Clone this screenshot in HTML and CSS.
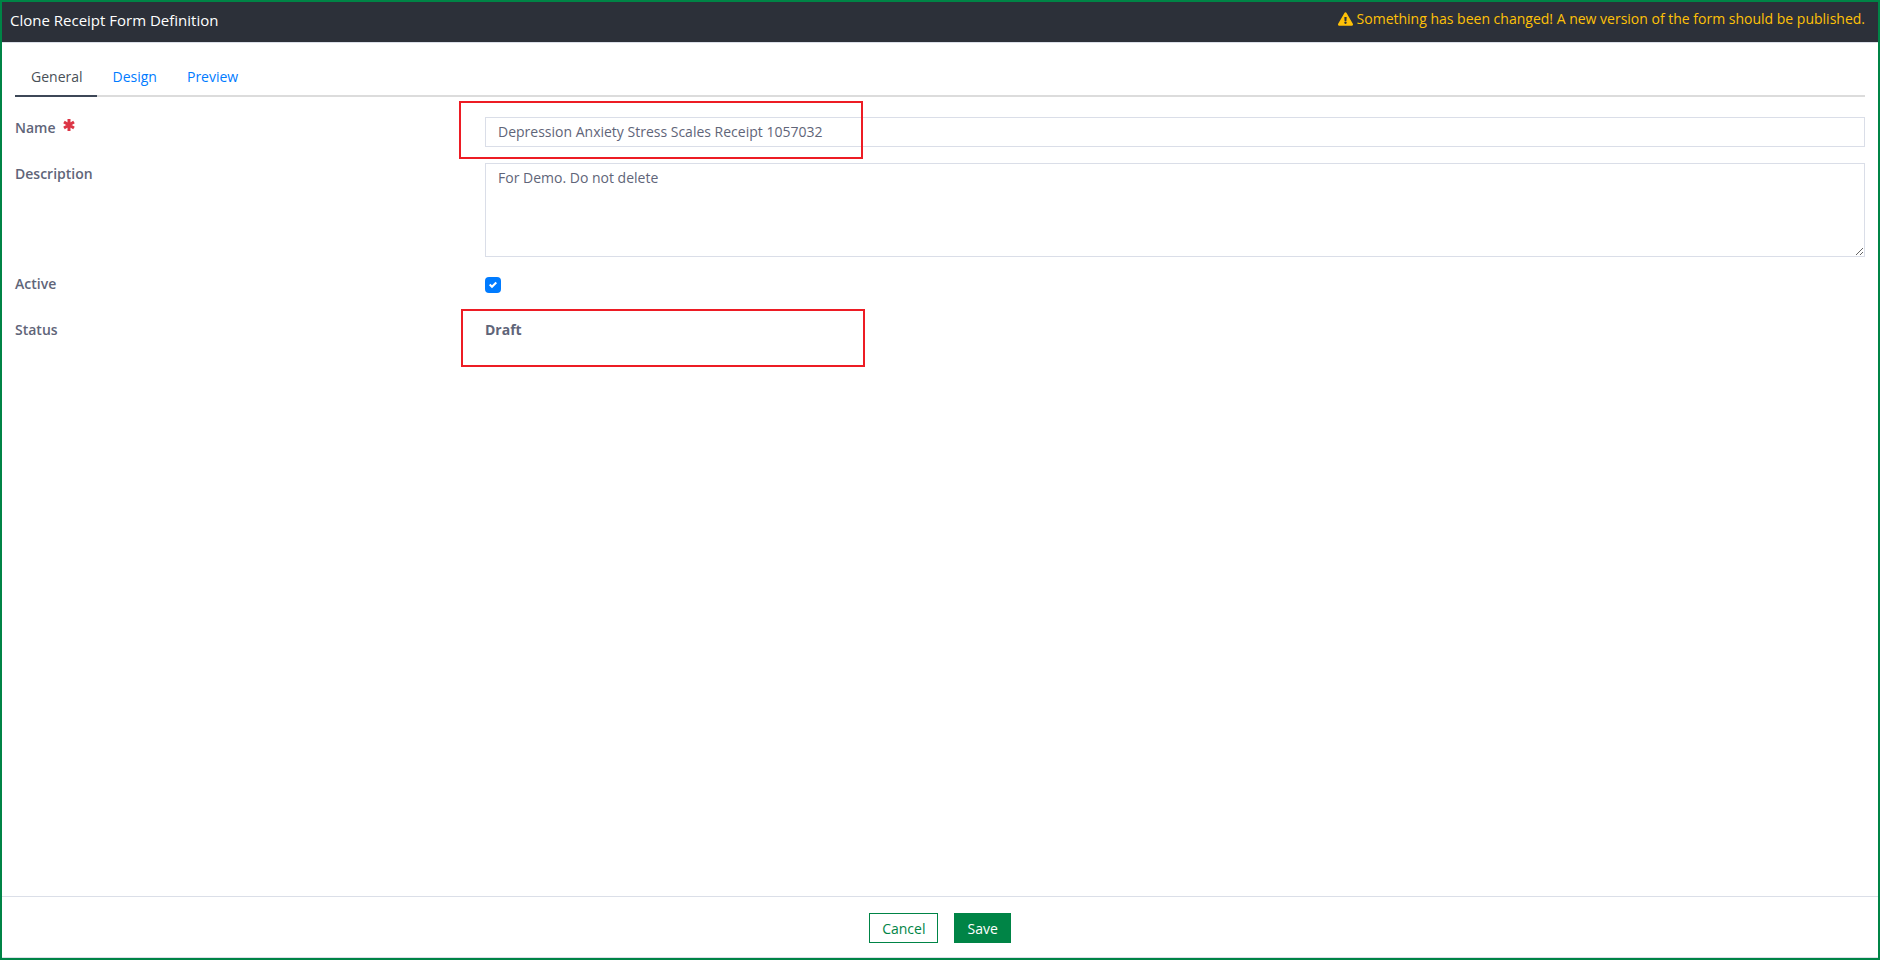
FILE: index.html
```html
<!DOCTYPE html>
<html lang="en">
<head>
<meta charset="utf-8">
<title>Clone Receipt Form Definition</title>
<link rel="stylesheet" href="styles.css">
</head>
<body>
<div class="dialog">
  <header class="dialog-header">
    <h1 class="dialog-title">Clone Receipt Form Definition</h1>
    <p class="dialog-warning">
      <svg class="warning-icon" viewBox="0 0 576 512" aria-hidden="true"><path fill="currentColor" d="M569.5 440C588 472 564.800 512 527.900 512H48.100c-36.900 0-60-40.100-41.600-72L246.400 24c18.500-32 64.700-32 83.200 0l239.900 416zM288 354c-25.400 0-46 20.600-46 46s20.600 46 46 46 46-20.600 46-46-20.600-46-46-46zm-43.700-165.300l7.400 136c.3 6.400 5.600 11.300 12 11.300h48.500c6.400 0 11.600-5 12-11.300l7.400-136c.4-6.900-5.100-12.700-12-12.700h-63.400c-6.900 0-12.300 5.800-11.900 12.700z"/></svg>
      <span>Something has been changed! A new version of the form should be published.</span>
    </p>
  </header>

  <main class="dialog-body">
    <nav class="tabs">
      <a class="tab tab-active" href="#general">General</a>
      <a class="tab" href="#design">Design</a>
      <a class="tab" href="#preview">Preview</a>
    </nav>

    <form class="form" id="definition-form">
      <div class="row">
        <label class="label" for="name">Name
          <svg class="required-icon" viewBox="0 0 12 12" aria-hidden="true"><path stroke="currentColor" stroke-width="3" d="M6 0v12M1 3l10 6M11 3L1 9"/></svg>
        </label>
        <div class="field">
          <input class="control" id="name" type="text" value="Depression Anxiety Stress Scales Receipt 1057032">
          <span class="highlight highlight-name"></span>
        </div>
      </div>
      <div class="row">
        <label class="label" for="description">Description</label>
        <div class="field">
          <textarea class="control control-area" id="description" rows="4">For Demo. Do not delete</textarea>
        </div>
      </div>
      <div class="row">
        <label class="label" for="active">Active</label>
        <div class="field">
          <span class="check">
            <input class="check-input" id="active" type="checkbox" checked>
            <svg class="check-mark" viewBox="0 0 8 8" aria-hidden="true"><path fill="#fff" d="M6.564.75l-3.590 3.612-1.538-1.550L0 4.260 2.974 7.250 8 2.193z"/></svg>
          </span>
        </div>
      </div>
      <div class="row">
        <span class="label">Status</span>
        <div class="field">
          <strong class="status">Draft</strong>
          <span class="highlight highlight-status"></span>
        </div>
      </div>
    </form>
  </main>

  <footer class="dialog-footer">
    <button class="button button-outline" type="button">Cancel</button>
    <button class="button button-primary" type="submit" form="definition-form">Save</button>
  </footer>
</div>
</body>
</html>
```

FILE: styles.css
```css
* {
  box-sizing: border-box;
}

body {
  margin: 0;
  color: #5f6579;
  background: #fff;
  font: 14px/21px "Segoe UI", "Open Sans", "Noto Sans", sans-serif;
}

.dialog {
  display: flex;
  flex-direction: column;
  min-height: 100vh;
  border: 2px solid #008446;
}

.dialog-header {
  display: flex;
  justify-content: space-between;
  align-items: flex-start;
  padding: 6px 13px 10px 8px;
  border-bottom: 1px solid #dbdfe8;
  background: #2c3039;
}

.dialog-title {
  margin: 0;
  color: #fff;
  font-size: 15px;
  font-weight: 400;
  line-height: 24px;
}

.dialog-warning {
  display: flex;
  align-items: center;
  gap: 4px;
  margin: 0;
  color: #ffc107;
}

.warning-icon {
  width: 15px;
  height: 14px;
}

.dialog-body {
  flex: 1;
  padding: 16px 13px;
}

.tabs {
  display: flex;
  border-bottom: 2px solid #dcdcdc;
}

.tab {
  margin-bottom: -2px;
  padding: 7px 14px 8px 16px;
  border-bottom: 2px solid transparent;
  color: #007bff;
  text-decoration: none;
}

.tab-active {
  border-color: #3d4757;
  color: #495057;
}

.form {
  display: grid;
  gap: 16px;
  padding-top: 20px;
}

.row {
  display: grid;
  grid-template-columns: 1fr 3fr;
  gap: 10px;
  min-height: 30px;
}

.label {
  font-weight: 600;
}

.required-icon {
  width: 12px;
  height: 12px;
  margin-left: 4px;
  color: #dc3545;
  vertical-align: 2px;
}

.field {
  position: relative;
}

.control {
  display: block;
  width: 100%;
  height: 30px;
  padding: 3px 12px 5px;
  border: 1px solid #dadee8;
  border-radius: 0;
  outline: 0;
  color: inherit;
  background: #fff;
  font: inherit;
}

.control-area {
  height: 94px;
  resize: vertical;
}

.check {
  display: grid;
  width: 16px;
  margin-top: 4px;
}

.check-input,
.check-mark {
  grid-area: 1 / 1;
}

.check-input {
  width: 16px;
  height: 16px;
  margin: 0;
  border-radius: 4px;
  background: #007bff;
  appearance: none;
}

.check-mark {
  width: 8px;
  height: 8px;
  place-self: center;
  pointer-events: none;
}

.status {
  font-weight: 700;
}

.highlight {
  position: absolute;
  width: 404px;
  height: 58px;
  border: 2px solid #ed1c24;
  pointer-events: none;
}

.highlight-name {
  top: -16px;
  left: -26px;
}

.highlight-status {
  top: -10px;
  left: -24px;
}

.dialog-footer {
  display: flex;
  justify-content: center;
  gap: 16px;
  padding: 16px 0 14px;
  border-top: 1px solid #dbdfe8;
  border-bottom: 1px solid #dbdfe8;
}

.button {
  height: 30px;
  padding: 0 12px;
  border: 1px solid #008446;
  font: inherit;
}

.button-outline {
  color: #008446;
  background: #fff;
}

.button-primary {
  color: #fff;
  background: #008446;
}
```
